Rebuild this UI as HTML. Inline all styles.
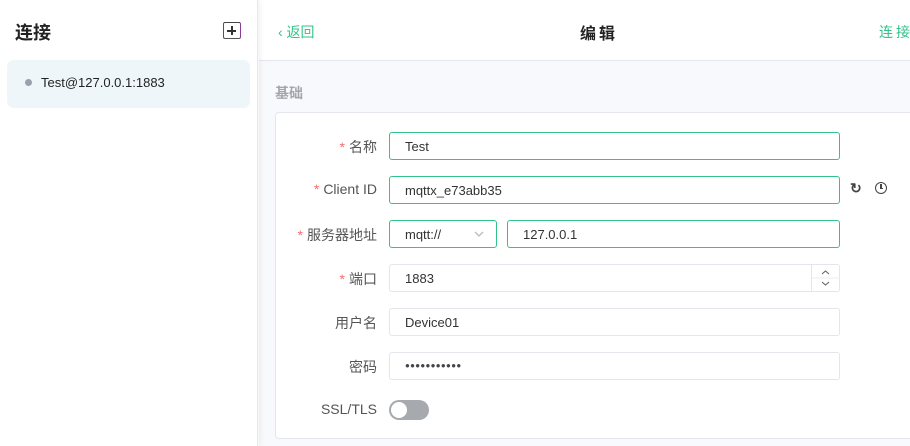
<!DOCTYPE html>
<html><head><meta charset="utf-8"><style>
*{box-sizing:border-box;margin:0;padding:0}
body{width:910px;height:446px;overflow:hidden;font-family:"Liberation Sans","Noto Sans CJK SC",sans-serif;background:#fff;position:relative}
.side{position:absolute;left:0;top:0;width:258px;height:446px;background:#fff;border-right:1px solid #e6e8ef;box-shadow:2px 0 6px rgba(0,0,0,.06);z-index:2}
.side h1{position:absolute;left:15px;top:19px;font-size:18px;font-weight:bold;color:#222}
.plus{position:absolute;left:223px;top:22px;width:18px;height:17px;border:1.5px solid #555;border-right-color:#8a3b9a;border-top-color:#444;border-radius:2px}
.plus:before{content:"";position:absolute;left:3px;top:7px;width:9px;height:1.5px;background:#333}
.plus:after{content:"";position:absolute;left:7px;top:3px;width:1.5px;height:9px;background:#333}
.item{position:absolute;left:7px;top:60px;width:243px;height:48px;background:#eff6fa;border-radius:7px}
.item .dot{position:absolute;left:18px;top:19px;width:7px;height:7px;border-radius:50%;background:#9ca0ad}
.item span{position:absolute;left:34px;top:15px;font-size:13px;color:#222}
.head{position:absolute;left:259px;top:0;right:0;height:61px;background:#fff;border-bottom:1px solid #e4e6ee}
.back{position:absolute;left:19px;top:22px;font-size:14px;color:#34c388}
.title{position:absolute;left:321px;top:20px;font-size:16px;font-weight:bold;color:#222;letter-spacing:3px}
.conn{position:absolute;left:620px;top:22px;font-size:14px;color:#34c388;letter-spacing:3px;white-space:nowrap}
.main{position:absolute;left:259px;top:61px;right:0;bottom:0;background:#f8f9fc}
.sec{position:absolute;left:16px;top:22px;font-size:14px;color:#a3a6ad;font-weight:bold}
.card{position:absolute;left:16px;top:51px;width:660px;height:327px;background:#fff;border:1px solid #e4e6ee;border-radius:4px}
.lab{position:absolute;right:533px;font-size:14px;color:#555;text-align:right;white-space:nowrap}
.lab i{color:#f56c6c;font-style:normal;margin-right:4px}
.inp{position:absolute;left:389px;width:451px;height:28px;border:1px solid #e4e6ee;border-radius:3px;font-size:13px;color:#333;padding:6px 0 0 15px}
.g{border-color:#34c388}
</style></head><body>
<div class="side"><h1>连接</h1><div class="plus"></div>
<div class="item"><div class="dot"></div><span>Test@127.0.0.1:1883</span></div></div>
<div class="head"><div class="back">‹ 返回</div><div class="title">编辑</div><div class="conn">连接</div></div>
<div class="main"><div class="sec">基础</div><div class="card"></div></div>
<div style="position:absolute;left:0;top:0;width:910px;height:446px;z-index:3">
<div class="lab" style="top:137px"><i>*</i>名称</div>
<div class="inp g" style="top:132px">Test</div>
<div class="lab" style="top:181px"><i>*</i>Client ID</div>
<div class="inp g" style="top:176px">mqttx_e73abb35</div>
<div style="position:absolute;left:850px;top:180px;font-size:14px;color:#444;font-weight:bold">↻</div>
<div style="position:absolute;left:875px;top:182px;width:12px;height:12px;border:1.8px solid #444;border-radius:50%"><div style="position:absolute;left:4px;top:1px;width:1.5px;height:4px;background:#444"></div><div style="position:absolute;left:4px;top:4.5px;width:3px;height:1.5px;background:#444"></div></div>
<div class="lab" style="top:225px"><i>*</i>服务器地址</div>
<div class="inp g" style="top:220px;width:108px">mqtt://<svg style="position:absolute;right:12px;top:10px" width="10" height="6"><path d="M1 1L5 5L9 1" fill="none" stroke="#bbb" stroke-width="1.3"/></svg></div>
<div class="inp g" style="top:220px;left:507px;width:333px">127.0.0.1</div>
<div class="lab" style="top:269px"><i>*</i>端口</div>
<div class="inp" style="top:264px">1883<div style="position:absolute;right:0;top:0;width:28px;height:26px;border-left:1px solid #e4e6ee"><svg width="28" height="26"><path d="M10 9L13.5 6L17 9" fill="none" stroke="#666" stroke-width="1.1"/><path d="M10 17L13.5 20L17 17" fill="none" stroke="#666" stroke-width="1.1"/><line x1="0" y1="13" x2="28" y2="13" stroke="#eee"/></svg></div></div>
<div class="lab" style="top:313px">用户名</div>
<div class="inp" style="top:308px">Device01</div>
<div class="lab" style="top:357px">密码</div>
<div class="inp" style="top:352px;font-size:8px;padding-top:8px;letter-spacing:0.3px;color:#444">●●●●●●●●●●●</div>
<div class="lab" style="top:401px">SSL/TLS</div>
<div style="position:absolute;left:389px;top:400px;width:40px;height:20px;border-radius:10px;background:#a6a9ae"><div style="position:absolute;left:2px;top:2px;width:16px;height:16px;border-radius:50%;background:#fff"></div></div>
</div>
</body></html>
